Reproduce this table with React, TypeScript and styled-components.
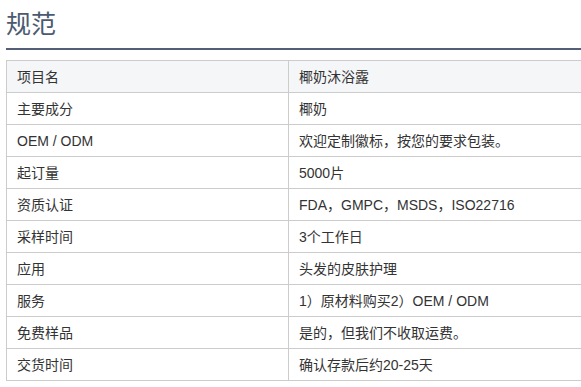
import styled, { createGlobalStyle } from 'styled-components';

const GlobalStyle = createGlobalStyle`
  html, body {
    margin: 0;
    padding: 0;
    background: #fff;
    overflow: hidden;
  }
  body {
    font-family: 'Liberation Sans', 'Noto Sans CJK SC', sans-serif;
    color: #333;
  }
`;

const Page = styled.div`
  width: 620px;
  padding: 6px 0 0 6px;
`;

const Heading = styled.h2`
  margin: 0;
  font-size: 25px;
  font-weight: 400;
  line-height: 36px;
  color: #4b5a70;
  padding-bottom: 6px;
  border-bottom: 2px solid #525f76;
`;

const Table = styled.table`
  margin-top: 10px;
  width: 100%;
  border-collapse: collapse;
  font-size: 14px;
`;

const Row = styled.tr<{ $head?: boolean }>`
  background: ${(p) => (p.$head ? '#f5f6f8' : '#fff')};
`;

const Cell = styled.td`
  height: 32px;
  box-sizing: border-box;
  padding: 0 10px;
  border: 1px solid #cccccc;
  vertical-align: middle;
  line-height: 18px;
  &:first-child {
    width: 282px;
  }
`;

const rows: [string, string][] = [
  ['项目名', '椰奶沐浴露'],
  ['主要成分', '椰奶'],
  ['OEM / ODM', '欢迎定制徽标，按您的要求包装。'],
  ['起订量', '5000片'],
  ['资质认证', 'FDA，GMPC，MSDS，ISO22716'],
  ['采样时间', '3个工作日'],
  ['应用', '头发的皮肤护理'],
  ['服务', '1）原材料购买2）OEM / ODM'],
  ['免费样品', '是的，但我们不收取运费。'],
  ['交货时间', '确认存款后约20-25天'],
];

const App = () => (
  <>
    <GlobalStyle />
    <Page>
      <Heading>规范</Heading>
      <Table>
        <tbody>
          {rows.map(([k, v], i) => (
            <Row key={k} $head={i === 0}>
              <Cell>{k}</Cell>
              <Cell>{v}</Cell>
            </Row>
          ))}
        </tbody>
      </Table>
    </Page>
  </>
);

export default App;
